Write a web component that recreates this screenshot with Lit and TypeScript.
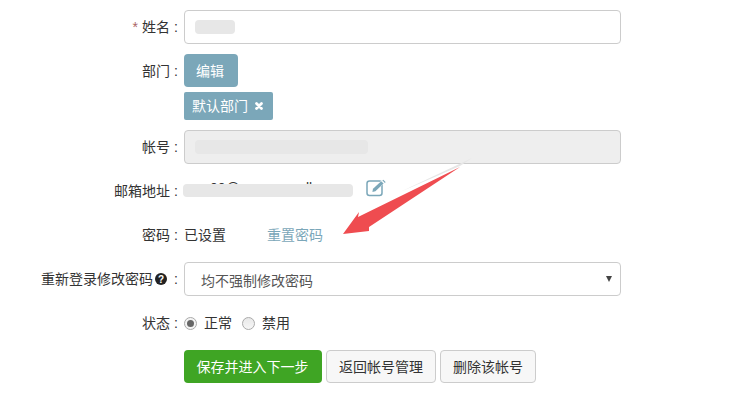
import { LitElement, html, css } from "lit";
import { customElement } from "lit/decorators.js";

@customElement("app-root")
export class AppRoot extends LitElement {
  static styles = css`
    :host {
      display: block;
      position: relative;
      width: 740px;
      height: 414px;
      overflow: hidden;
      background: #fff;
      color: #333;
      font: 14px/20px "Liberation Sans", "Noto Sans CJK SC", sans-serif;
    }
    .form {
      display: flex;
      flex-direction: column;
      padding-top: 10px;
      width: 621px;
    }
    .row {
      display: grid;
      grid-template-columns: 178px 437px;
      column-gap: 6px;
      align-items: center;
    }
    .label {
      display: flex;
      justify-content: flex-end;
      align-items: center;
      white-space: nowrap;
    }
    .colon { width: 8px; text-align: right; flex: none; }
    .star { color: #a66; margin-right: 4px; }
    .field {
      box-sizing: border-box;
      height: 34px;
      border: 1px solid #ccc;
      border-radius: 4px;
      background: #fff;
      display: flex;
      align-items: center;
      padding: 0 10px;
      position: relative;
    }
    .disabled { background: #eee; }
    .redact { display: block; background: #e7e7e7; border-radius: 4px; height: 14px; }
    .select { padding: 3px 8px 0 16px; justify-content: space-between; color: #555; }
    .caret { width: 0; height: 0; border: 3.5px solid transparent; border-top: 6px solid #444; border-bottom: 0; margin-top: -4px; }
    .btn {
      box-sizing: border-box;
      height: 33px;
      border: 1px solid transparent;
      border-radius: 4px;
      display: inline-flex;
      align-items: center;
      justify-content: center;
      white-space: nowrap;
      font: inherit;
      padding: 0;
    }
    .teal { background: #7ba7b9; color: #fff; width: 54px; padding-right: 2px; }
    .tag {
      box-sizing: border-box;
      height: 28px;
      width: 89px;
      margin-top: 5px;
      background: #7ba7b9;
      color: #fff;
      border-radius: 2px;
      display: flex;
      align-items: center;
      padding-left: 8px;
      gap: 6px;
    }
    .stack { display: flex; flex-direction: column; align-items: flex-start; }
    .email { display: flex; align-items: center; height: 22px; }
    .addr { position: relative; width: 169px; height: 22px; white-space: pre; color: #333; }
    .addr .redact { position: absolute; left: -1px; top: 4px; width: 170px; height: 13px; }
    .addr .txt { position: absolute; left: 26px; top: -2px; }
    .email svg { margin-left: 13px; margin-top: -7px; }
    .pw { display: flex; gap: 41px; }
    .link { color: #7ba7b9; }
    .help { margin: 0 3px 0 2px; }
    .radios { display: flex; align-items: center; }
    .radio {
      box-sizing: border-box;
      width: 13px;
      height: 13px;
      border-radius: 50%;
      border: 1px solid #aaa;
      background: linear-gradient(#e8e8e8, #f6f6f6);
      margin-right: 7px;
      display: flex;
      align-items: center;
      justify-content: center;
    }
    .radio.on { background: #f4f4f4; }
    .radio.on::after {
      content: "";
      width: 7px;
      height: 7px;
      border-radius: 50%;
      background: #666;
    }
    .radios .sp { margin-right: 10px; }
    .actions { display: flex; gap: 4px; }
    .green { background: #3fa524; color: #fff; width: 138px; padding-right: 1px; }
    .plain { background: #f7f7f7; border-color: #ccc; color: #333; }
    .arrow { position: absolute; left: 0; top: 0; pointer-events: none; }
  `;

  render() {
    return html`
      <div class="form">
        <div class="row">
          <div class="label"><span class="star">*</span>姓名<span class="colon">:</span></div>
          <div class="field"><span class="redact" style="width:40px"></span></div>
        </div>
        <div class="row" style="margin-top:10px;align-items:start">
          <div class="label" style="height:33px">部门<span class="colon">:</span></div>
          <div class="stack">
            <button class="btn teal">编辑</button>
            <div class="tag">默认部门
              <svg width="10" height="10" viewBox="0 0 10 10"><path d="M2.5 2.5l5 5M7.5 2.5l-5 5" stroke="#fff" stroke-width="2.8" stroke-linecap="round"/></svg>
            </div>
          </div>
        </div>
        <div class="row" style="margin-top:10px">
          <div class="label">帐号<span class="colon">:</span></div>
          <div class="field disabled"><span class="redact" style="width:173px"></span></div>
        </div>
        <div class="row" style="margin-top:16px">
          <div class="label">邮箱地址<span class="colon">:</span></div>
          <div class="email">
            <div class="addr">
              <span class="txt">00@                 ll</span>
              <span class="redact"></span>
            </div>
            <svg width="21" height="18" viewBox="0 0 21 18" fill="none">
              <rect x="1" y="2" width="15" height="14.5" rx="2.5" stroke="#7ba7b9" stroke-width="1.5"/>
              <path d="M6 13l1-3.5L15.5 1.5l3 2.5-8.5 8z" fill="#fff"/>
              <path d="M7 9.8L15.2 2.2l2.4 2.3-8.2 7.8-3 .8z" fill="#7ba7b9"/>
              <path d="M16.3 1.3l1-.6 2.3 2.2-.7 1z" fill="#7ba7b9"/>
            </svg>
          </div>
        </div>
        <div class="row" style="margin-top:23px">
          <div class="label">密码<span class="colon">:</span></div>
          <div class="pw"><span>已设置</span><span class="link">重置密码</span></div>
        </div>
        <div class="row" style="margin-top:17px">
          <div class="label">重新登录修改密码<svg class="help" width="12" height="12" viewBox="0 0 12 12"><circle cx="6" cy="6" r="6" fill="#222"/><text x="6" y="9.5" text-anchor="middle" font-size="10" font-weight="700" font-family="Liberation Sans" fill="#fff">?</text></svg><span class="colon">:</span></div>
          <div class="field select"><span>均不强制修改密码</span><span class="caret"></span></div>
        </div>
        <div class="row" style="margin-top:17px">
          <div class="label">状态<span class="colon">:</span></div>
          <div class="radios"><span class="radio on"></span><span class="sp">正常</span><span class="radio"></span><span>禁用</span></div>
        </div>
        <div class="row" style="margin-top:17px">
          <div></div>
          <div class="actions">
            <button class="btn green">保存并进入下一步</button>
            <button class="btn plain" style="width:110px">返回帐号管理</button>
            <button class="btn plain" style="width:96px">删除该帐号</button>
          </div>
        </div>
      </div>
      <svg class="arrow" width="740" height="414" viewBox="0 0 740 414">
        <polygon points="472,158 400,192 460,166" fill="#e6e6e6"/>
        <polygon points="343,234 359,212 358,217 460,167 369,227 369,231" fill="#ef4c50"/>
      </svg>
    `;
  }
}
